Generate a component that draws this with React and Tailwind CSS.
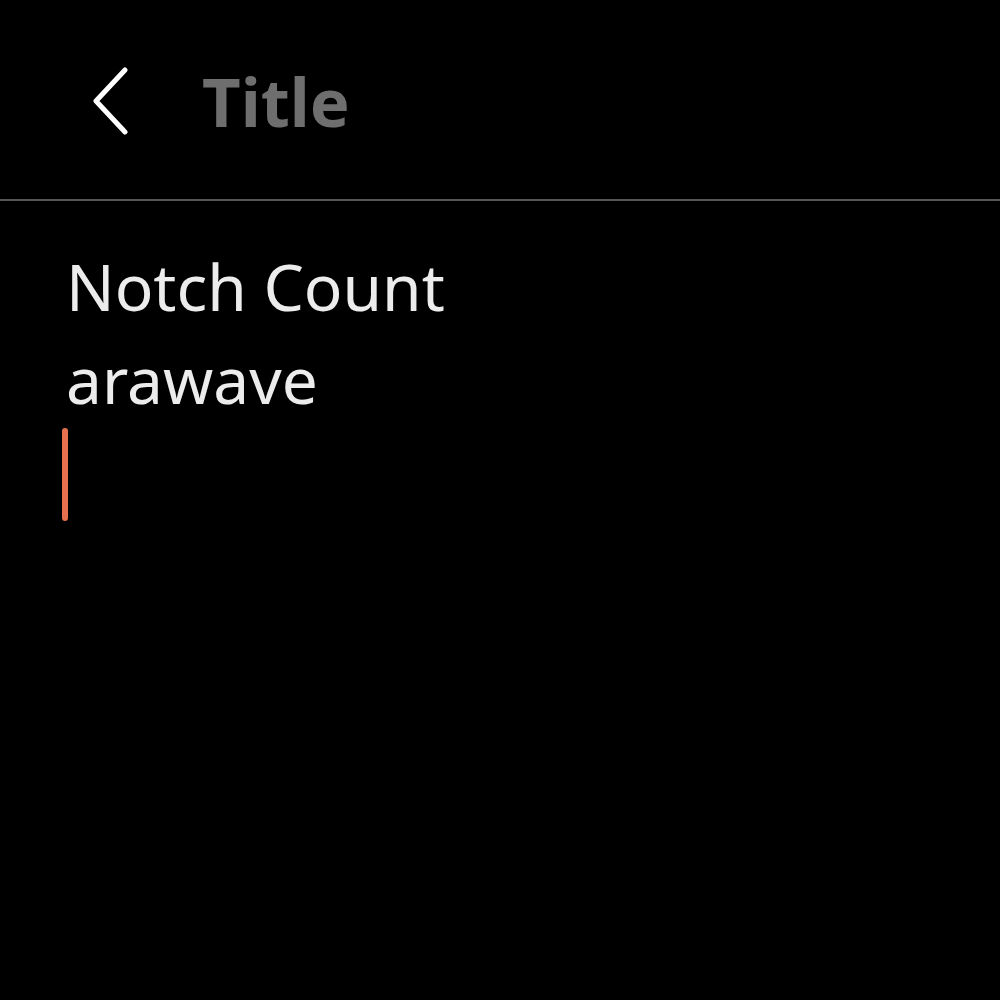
import React from "react";

function BackChevron() {
  return (
    <svg width="40" height="68" viewBox="0 0 40 68" fill="none" aria-hidden="true">
      <path d="M34 3 L5 34 L34 65" stroke="#ffffff" strokeWidth="5" strokeLinecap="round" strokeLinejoin="round" />
    </svg>
  );
}

export default function App() {
  return (
    <div className="h-[1000px] w-[1000px] bg-black font-['Noto_Sans',sans-serif] text-[#ececec]">
      <header className="flex h-[201px] items-center border-b-2 border-[#555555] pt-[3px]">
        <button type="button" className="ml-[91px] flex items-center" aria-label="Back">
          <BackChevron />
        </button>
        <h1 className="ml-[71px] text-[67px] font-bold leading-none text-[#6e6e6e]">Title</h1>
      </header>
      <main className="px-[66px] pt-[39px]">
        <div className="text-[64px] leading-[93px]">Notch Count</div>
        <div className="text-[64px] leading-[93px]">arawave</div>
        <div className="-ml-[4px] mt-[2px] h-[93px] w-[6px] rounded-sm bg-[#e8704f]" />
      </main>
    </div>
  );
}
